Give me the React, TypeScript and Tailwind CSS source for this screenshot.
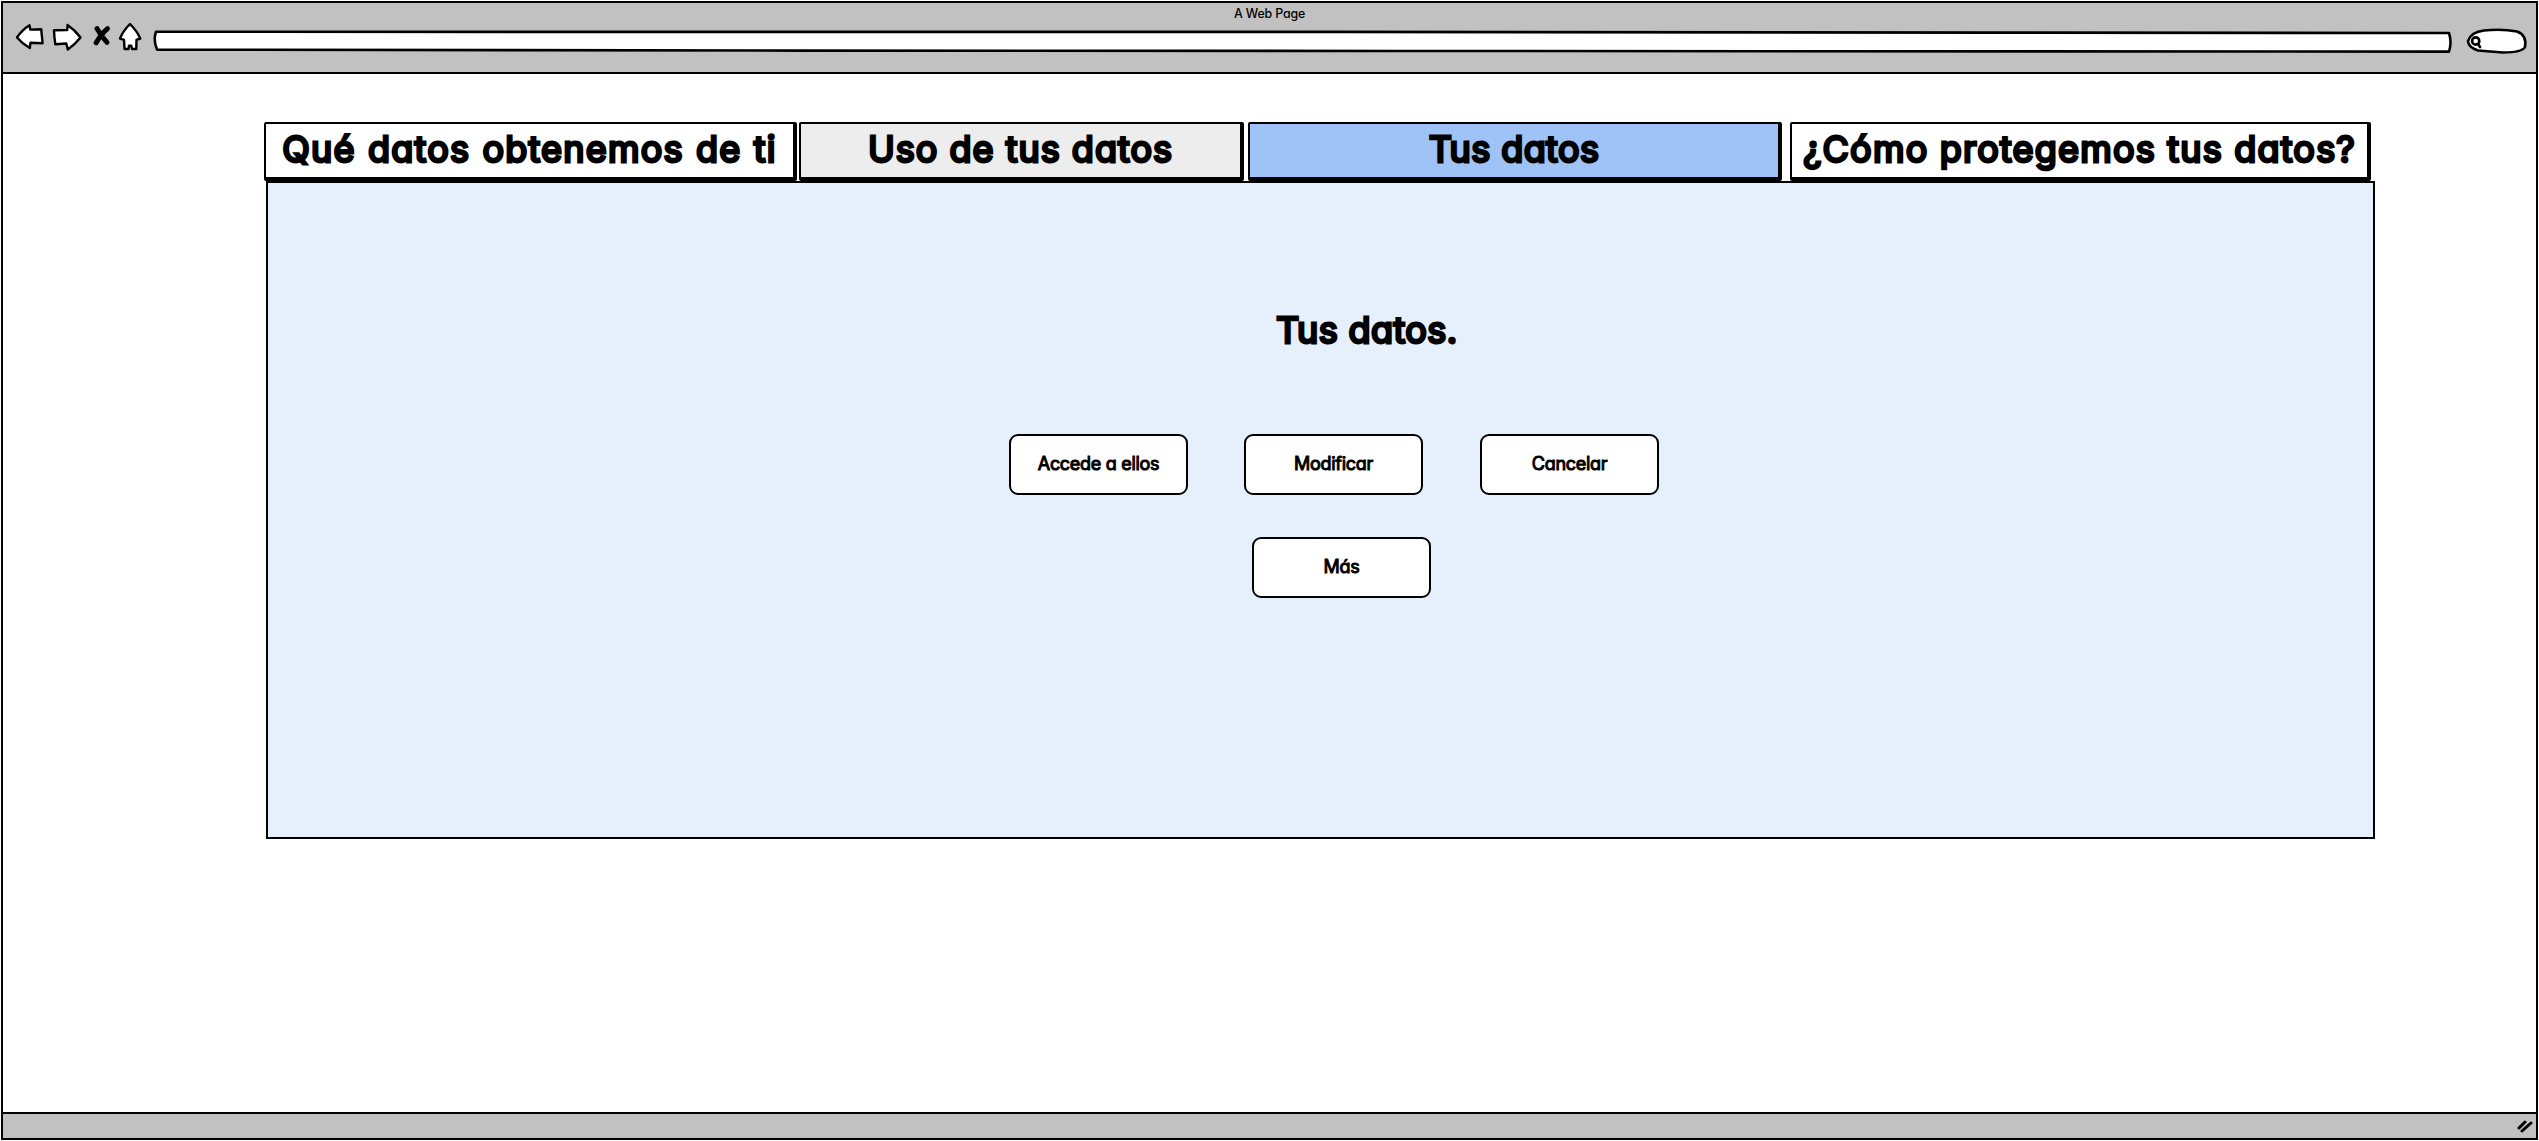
import React from "react";

const tabs = [
  { label: "Qué datos obtenemos de ti", box: "w-[533px] mr-[2px] bg-white", text: "tracking-[1.2px] [word-spacing:1px]" },
  { label: "Uso de tus datos", box: "w-[445px] mr-[4px] bg-[#ededed]", text: "tracking-[1px]" },
  { label: "Tus datos", box: "w-[534px] mr-[8px] bg-[#9fc3f7]", text: "tracking-[0.4px]" },
  { label: "¿Cómo protegemos tus datos?", box: "w-[581px] bg-white", text: "tracking-[1.2px]" },
];

const display =
  "text-[36px] leading-none font-normal whitespace-nowrap [-webkit-text-stroke:2.8px_black] [stroke-linejoin:round]";

function SketchButton({ label, className = "" }: { label: string; className?: string }) {
  return (
    <button
      className={`flex h-[61px] w-[179px] items-center justify-center rounded-[9px] border-2 border-black bg-white pb-[1px] text-[18px] leading-none font-normal tracking-[-0.3px] whitespace-nowrap [-webkit-text-stroke:1px_black] ${className}`}
    >
      {label}
    </button>
  );
}

function NavIcons() {
  return (
    <svg width="132" height="36" viewBox="14 20 132 36" fill="white" stroke="black" strokeWidth="2.4" strokeLinejoin="round" strokeLinecap="round">
      <path d="M17 37.5 Q22 30 29.5 25.3 L30.3 29.6 L41.2 29.3 L42.6 43.2 L30.5 42.7 L29.8 48 Q22 43.5 17 37.5Z" />
      <path d="M54 30.2 L67.3 30 L67.5 25 Q75 30 80.5 37.5 Q75 44.5 67.8 49.5 L66.3 43.5 L55.3 44.3 Q54.2 37 54 30.2Z" />
      <path d="M97 28.6 Q101 36 107 42.4 M107.5 28.6 Q101 34 96.2 42.8" strokeWidth="5" />
      <path d="M130 24 Q123 31 120 38.5 L124 39.8 L124.5 49 L128.5 49 L129 45.8 L131.2 45.8 L132 49 L136.3 49 L136.5 39.8 L140.3 38.5 Q137 31 130 24Z" />
    </svg>
  );
}

export default function App() {
  return (
    <div className="flex h-[1141px] w-[2539px] flex-col bg-white pt-px pr-[1px] pb-px pl-[1px] text-black [font-family:Inter,'Noto_Sans',sans-serif] [font-feature-settings:'cv11']">
      <div className="flex flex-1 flex-col border-2 border-black">
        <header className="flex h-[71px] flex-col border-b-2 border-black bg-[#c1c1c1]">
          <div className="flex h-[17px] items-center justify-center pt-[6px] text-[12.4px] leading-none font-medium tracking-[-0.15px]">A Web Page</div>
          <div className="flex h-[36px] items-start pl-[11px]">
            <NavIcons />
            <svg className="mt-[7px] ml-[6px]" width="2302" height="28" viewBox="152 27 2302 28" fill="white" stroke="black" strokeWidth="2.6" strokeLinejoin="round">
              <path d="M157 31.8 L1330 31.9 L2000 32.6 L2449 33 Q2452 42 2449 51.6 L1400 51 L800 50.6 L157 49.6 Q153 40 156 31.8Z" />
            </svg>
            <svg className="mt-[6px] ml-[9px]" width="66" height="32" viewBox="2463 26 66 32" fill="white" stroke="black" strokeWidth="2.6" strokeLinecap="round">
              <path d="M2484 30.5 Q2502 28.5 2517 31.5 Q2527 35 2525 47 Q2522 52.5 2503 52.5 L2478 50.5 Q2468 47 2468 41 Q2471 32 2484 30.5Z" />
              <path d="M2478.5 44.5 L2480 47.2" />
              <circle cx="2475.7" cy="41" r="3.6" />
            </svg>
          </div>
        </header>

        <main className="flex-1 pt-[48px] pl-[261px]">
          <nav className="flex h-[59px]">
            {tabs.map((tab) => (
              <div
                key={tab.label}
                className={`flex shrink-0 items-center justify-center rounded-[2px] border-t-2 border-r-4 border-b-4 border-l-2 border-black pb-[3px] ${tab.box}`}
              >
                <span className={`${display} ${tab.text}`}>{tab.label}</span>
              </div>
            ))}
          </nav>
          <section className="ml-[2px] flex h-[658px] w-[2109px] flex-col border-2 border-black bg-[#e6f0fd] pt-[129px]">
            <h1 className={`pl-[1008px] tracking-[0.4px] ${display}`}>Tus datos.</h1>
            <div className="mt-[86px] ml-[741px] flex gap-[57px]">
              <SketchButton label="Accede a ellos" />
              <SketchButton label="Modificar" className="-ml-px" />
              <SketchButton label="Cancelar" />
            </div>
            <SketchButton label="Más" className="mt-[42px] ml-[984px]" />
          </section>
        </main>

        <footer className="flex h-[26px] items-center justify-end border-t-2 border-black bg-[#c1c1c1] pr-[2px]">
          <svg width="18" height="14" viewBox="0 0 18 14" stroke="black" strokeWidth="3" strokeLinecap="round" fill="none">
            <path d="M3 9 L9 3 M6 12 L15 4" />
          </svg>
        </footer>
      </div>
    </div>
  );
}
